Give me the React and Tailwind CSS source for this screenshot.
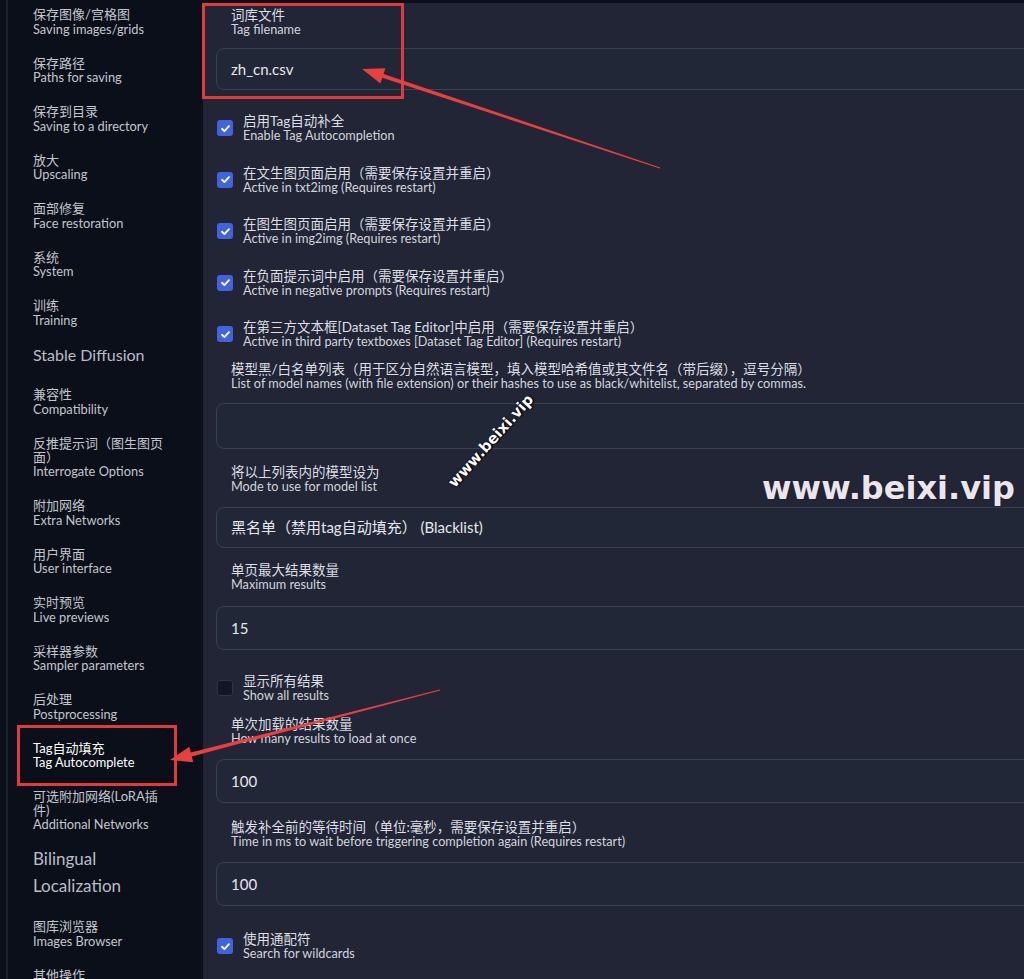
import React from 'react';

const sideItems = [
    { zh: '保存图像/宫格图', en: 'Saving images/grids' },
    { zh: '保存路径', en: 'Paths for saving' },
    { zh: '保存到目录', en: 'Saving to a directory' },
    { zh: '放大', en: 'Upscaling' },
    { zh: '面部修复', en: 'Face restoration' },
    { zh: '系统', en: 'System' },
    { zh: '训练', en: 'Training' },
    { head: 'Stable Diffusion' },
    { zh: '兼容性', en: 'Compatibility' },
    { zh: '反推提示词（图生图页面）', en: 'Interrogate Options' },
    { zh: '附加网络', en: 'Extra Networks' },
    { zh: '用户界面', en: 'User interface' },
    { zh: '实时预览', en: 'Live previews' },
    { zh: '采样器参数', en: 'Sampler parameters' },
    { zh: '后处理', en: 'Postprocessing' },
    { zh: 'Tag自动填充', en: 'Tag Autocomplete', active: true },
    { zh: '可选附加网络(LoRA插件)', en: 'Additional Networks' },
    { big: 'Bilingual Localization' },
    { zh: '图库浏览器', en: 'Images Browser' },
    { zh: '其他操作' },
];

const Label = ({ zh, en, className = '' }) => (
    <div className={'pl-[15px] ' + className}>
        <div className="text-[13.5px] leading-[14px] text-[#dcdfe4]">{zh}</div>
        <div className="text-[12.7px] leading-[14px] text-[#d1d5db]">{en}</div>
    </div>
);

const Box = ({ h, value, className = '' }) => (
    <div className={'w-[840px] border border-[#394052] rounded-[8px] bg-[#222738] flex items-center pl-[14px] text-[15px] text-[#e5e7eb] whitespace-pre ' + h + ' ' + className}>
        {value}
    </div>
);

const Check = ({ zh, en, checked = true, className = '' }) => (
    <div className={'flex items-center ' + className}>
        {checked ? (
            <div className="ml-[1px] w-[16px] h-[16px] rounded-[3px] bg-[#4363dc] flex items-center justify-center">
                <svg width="11" height="11" viewBox="0 0 12 12">
                    <path d="M2.2 6.3 L4.8 8.8 L9.8 3.4" fill="none" stroke="white" strokeWidth="2" strokeLinecap="round" strokeLinejoin="round" />
                </svg>
            </div>
        ) : (
            <div className="ml-[1px] w-[16px] h-[16px] rounded-[3px] bg-[#111624] border border-[#2e3545]" />
        )}
        <div className="ml-[10px]">
            <div className="text-[13.5px] leading-[14px] text-[#dcdfe4]">{zh}</div>
            <div className="text-[12.7px] leading-[14px] text-[#d1d5db]">{en}</div>
        </div>
    </div>
);

const App = () => {
    return (
        <div className="relative w-[1024px] h-[979px] overflow-hidden flex bg-[#0b0f19] font-['Lato','Noto_Sans_CJK_SC',sans-serif]">
            <aside className="w-[203px] shrink-0 flex">
                <div className="w-[2px] ml-[6px] h-full bg-[#1c2130]" />
                <nav className="pl-[25px] pt-[8px] w-[163px] flex flex-col gap-[20.8px]">
                    {sideItems.map((it, i) => {
                        if (it.head) {
                            return (
                                <div key={i} className="-mt-[3px] mb-[3px] text-[16px] leading-[20px] text-[#b9bdc6]">{it.head}</div>
                            );
                        }
                        if (it.big) {
                            return (
                                <div key={i} className="-mt-[7px] w-[120px] text-[17px] leading-[27px] text-[#b9bdc6]">{it.big}</div>
                            );
                        }
                        return (
                            <div key={i} className={'w-[138px] ' + (it.active ? 'text-white' : 'text-[#c2c6cd]')}>
                                <div className="text-[13px] leading-[13.7px]">{it.zh}</div>
                                {it.en && <div className="text-[12.8px] leading-[14px]">{it.en}</div>}
                            </div>
                        );
                    })}
                </nav>
            </aside>

            <main className="flex-1 bg-[#212536] border-t-[3px] border-[#0b0f19] pl-[13px] pt-[5px] overflow-hidden">
                <Label zh="词库文件" en="Tag filename" />
                <Box h="h-[42px]" value="zh_cn.csv" className="mt-[12px]" />

                <Check zh="启用Tag自动补全" en="Enable Tag Autocompletion" className="mt-[24px]" />
                <Check zh="在文生图页面启用（需要保存设置并重启）" en="Active in txt2img (Requires restart)" className="mt-[23.5px]" />
                <Check zh="在图生图页面启用（需要保存设置并重启）" en="Active in img2img (Requires restart)" className="mt-[23.5px]" />
                <Check zh="在负面提示词中启用（需要保存设置并重启）" en="Active in negative prompts (Requires restart)" className="mt-[23.5px]" />
                <Check zh="在第三方文本框[Dataset Tag Editor]中启用（需要保存设置并重启）" en="Active in third party textboxes [Dataset Tag Editor] (Requires restart)" className="mt-[23.5px]" />

                <Label zh="模型黑/白名单列表（用于区分自然语言模型，填入模型哈希值或其文件名（带后缀），逗号分隔）" en="List of model names (with file extension) or their hashes to use as black/whitelist, separated by commas." className="mt-[14px]" />
                <Box h="h-[46px]" value="" className="mt-[13px]" />

                <Label zh="将以上列表内的模型设为" en="Mode to use for model list" className="mt-[16px]" />
                <Box h="h-[41px]" value="黑名单（禁用tag自动填充） (Blacklist)" className="mt-[14px]" />

                <Label zh="单页最大结果数量" en="Maximum results" className="mt-[15px]" />
                <Box h="h-[44px]" value="15" className="mt-[15px]" />

                <Check zh="显示所有结果" en="Show all results" checked={false} className="mt-[24px]" />

                <Label zh="单次加载的结果数量" en="How many results to load at once" className="mt-[15px]" />
                <Box h="h-[44px]" value="100" className="mt-[14px]" />

                <Label zh="触发补全前的等待时间（单位:毫秒，需要保存设置并重启）" en="Time in ms to wait before triggering completion again (Requires restart)" className="mt-[17px]" />
                <Box h="h-[44px]" value="100" className="mt-[14px]" />

                <Check zh="使用通配符" en="Search for wildcards" className="mt-[26px]" />
            </main>

            {/* watermarks */}
            <div className="absolute left-[491px] top-[441px] -translate-x-1/2 -translate-y-1/2 -rotate-[48deg] whitespace-nowrap text-[15px] font-bold text-white font-['DejaVu_Sans',sans-serif] [text-shadow:0_0_2px_#000,1px_1px_1px_#000]">
                www.beixi.vip
            </div>
            <div className="absolute left-[762px] top-[468px] whitespace-nowrap text-[32px] leading-[40px] font-bold text-[#ebe6ec] font-['DejaVu_Sans',sans-serif] [text-shadow:0_0_2px_#1a1a22]">
                www.beixi.vip
            </div>

            {/* annotations */}
            <svg className="absolute left-0 top-0 pointer-events-none" width="1024" height="979" viewBox="0 0 1024 979">
                <rect x="203.5" y="4.5" width="199" height="93" fill="none" stroke="#e23a3c" strokeWidth="3" />
                <rect x="18.5" y="726.5" width="157" height="58" fill="none" stroke="#e23a3c" strokeWidth="3" />
                <polygon points="362,69 385.4,68.3 383.5,74 660.2,167.5 659.8,168.5 382.3,77.8 380.4,83.5" fill="#e8403f" />
                <polygon points="170,760 189.3,746.8 190.8,752.6 439.9,689.5 440.1,690.5 191.8,756.4 193.3,762.2" fill="#e8403f" />
            </svg>
        </div>
    );
};

export default App;
